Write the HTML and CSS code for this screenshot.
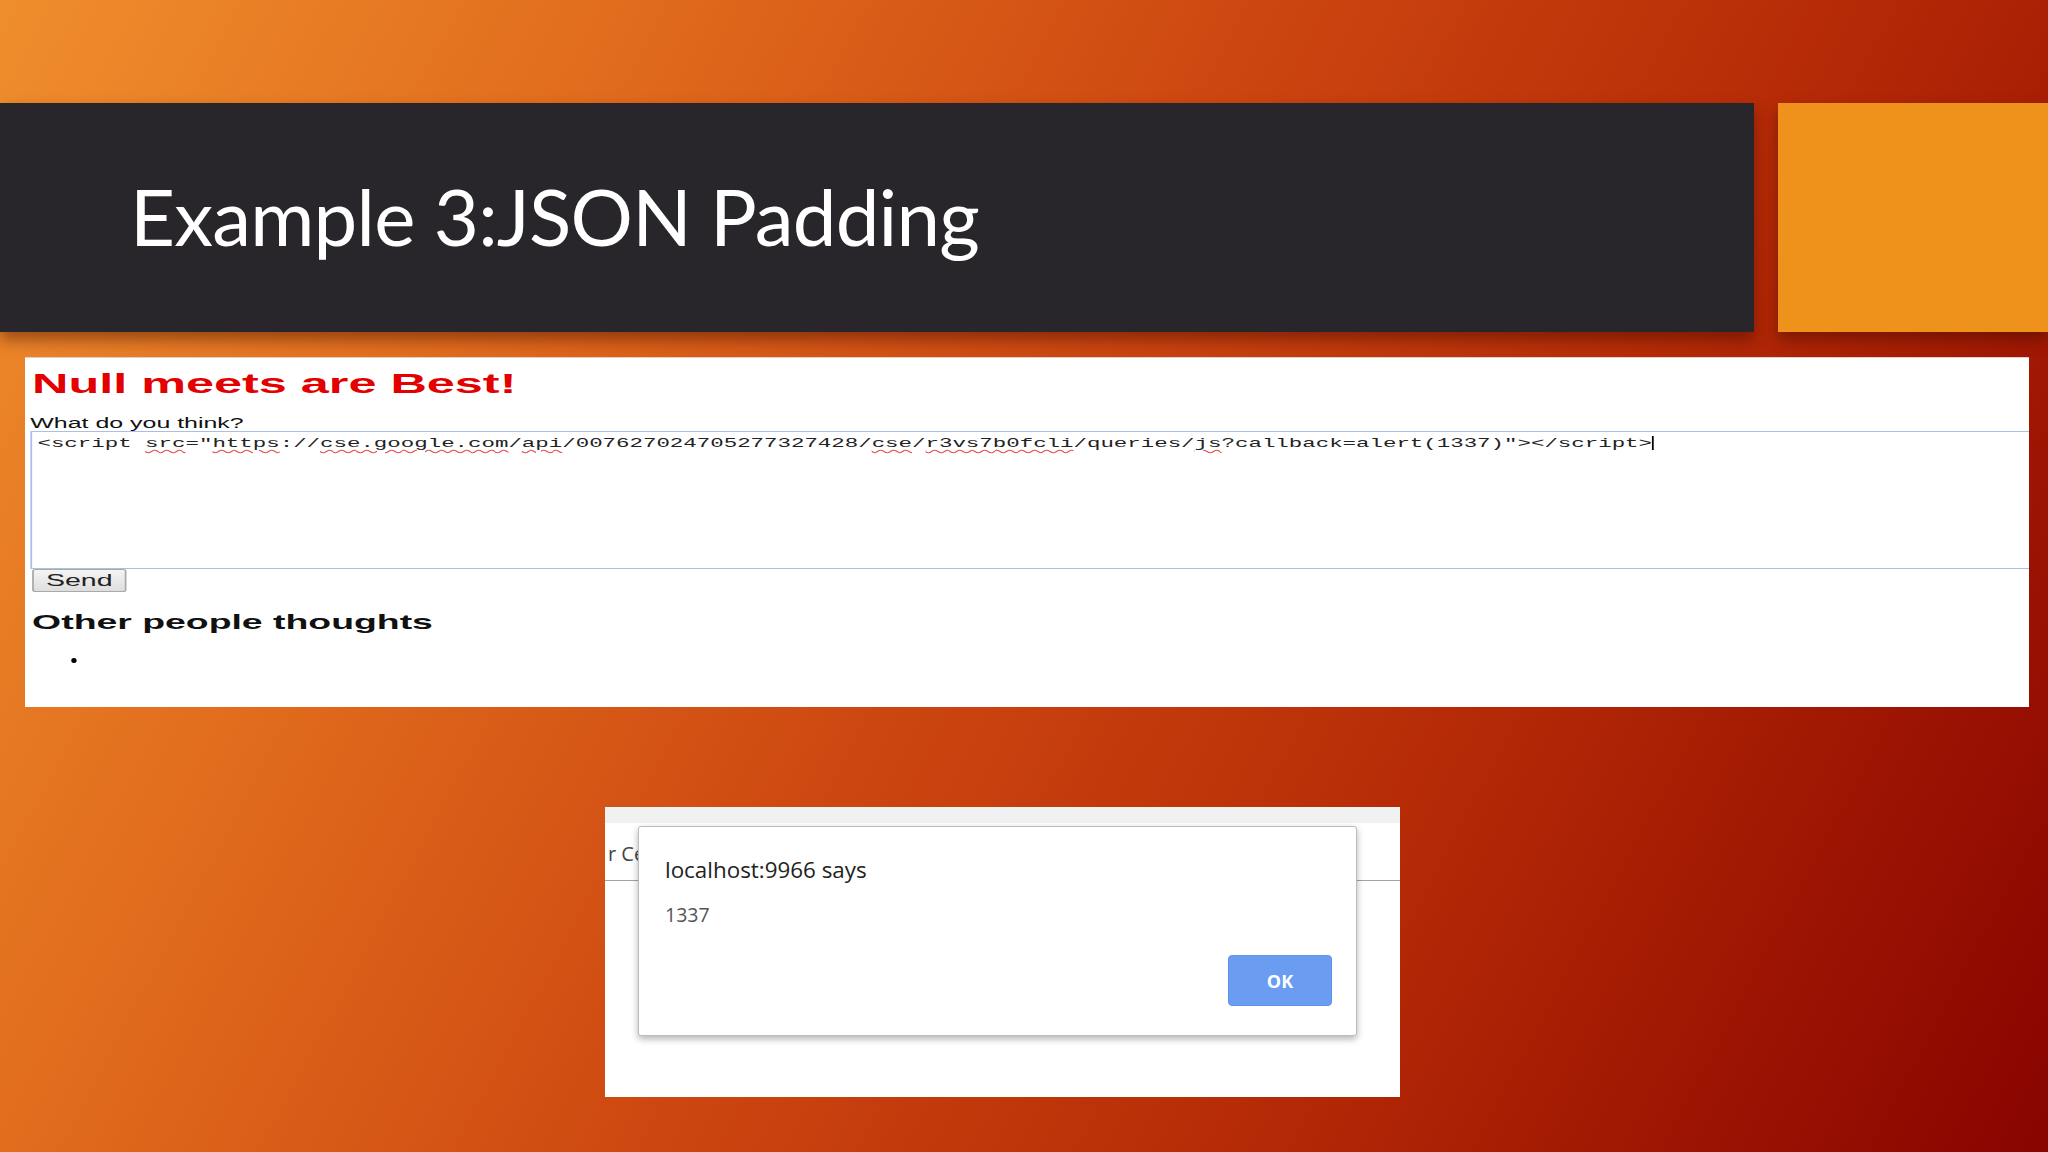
FILE: index.html
```html
<!DOCTYPE html>
<html lang="en">
  <head>
    <meta charset="utf-8">
    <title>Example 3:JSON Padding</title>
    <link rel="stylesheet" href="styles.css">
  </head>
  <body>
    <div class="slide">
      <div class="titleRow">
        <div class="titleBar">
          <h1 class="slideTitle">Example 3:JSON Padding</h1>
        </div>
        <div class="accent"></div>
      </div>

      <div class="shot">
        <div class="shotInner">
          <h2 class="pageTitle">Null meets are Best!</h2>
          <div class="label">What do you think?</div>
          <div class="textBox">&lt;script <span class="typo">src</span>="<span class="typo">https</span>://<span class="typo">cse.google.com</span>/<span class="typo">api</span>/007627024705277327428/<span class="typo">cse</span>/<span class="typo">r3vs7b0fcli</span>/queries/<span class="typo">js</span>?callback=alert(1337)"&gt;&lt;/script&gt;<span class="caret"></span></div>
          <button class="sendBtn">Send</button>
          <h3 class="thoughtsTitle">Other people thoughts</h3>
          <ul class="thoughts">
            <li></li>
          </ul>
        </div>
      </div>

      <div class="alertShot">
        <div class="tabStrip"></div>
        <div class="tabRow"><span class="tabText">r Ce</span></div>
        <div class="dialog">
          <div class="dialogTitle">localhost:9966 says</div>
          <div class="dialogMsg">1337</div>
          <div class="dialogActions">
            <button class="okBtn">OK</button>
          </div>
        </div>
      </div>
    </div>
  </body>
</html>
```

FILE: styles.css
```css
html, body {
  margin: 0;
  padding: 0;
}
body {
  width: 2048px;
  height: 1152px;
  overflow: hidden;
  background: linear-gradient(118deg, #ef8e2d 0%, #e06a1c 25%, #cc4610 48%, #b52a06 70%, #9a1202 88%, #880400 100%);
  font-family: "Liberation Sans", Arial, sans-serif;
}
.slide {
  padding-top: 103px;
}

/* title band */
.titleRow {
  display: flex;
  height: 229px;
  gap: 24px;
}
.titleBar {
  width: 1754px;
  background: #28262a;
  display: flex;
  align-items: center;
  padding-left: 130px;
  box-sizing: border-box;
  box-shadow: 0 8px 14px rgba(60, 10, 0, 0.45);
}
.slideTitle {
  margin: 0;
  color: #ffffff;
  font-family: Lato, "Open Sans", sans-serif;
  font-weight: 400;
  font-size: 78px;
  line-height: 1;
  letter-spacing: -0.8px;
  padding-bottom: 4px;
}
.accent {
  flex: 1;
  background: #ef921c;
  box-shadow: 0 8px 14px rgba(60, 10, 0, 0.45);
}

/* stretched browser screenshot */
.shot {
  margin: 25px 0 0 25px;
  width: 2004px;
  height: 350px;
  background: #ffffff;
  border-top: 1px solid #d9cfcf;
  box-sizing: border-box;
  overflow: hidden;
}
.shotInner {
  width: 1126px;
  padding: 9px 0 0 3px;
  transform: scaleX(1.78);
  transform-origin: 0 0;
  box-sizing: border-box;
}
.pageTitle {
  margin: 0 0 0 1px;
  color: #e40000;
  font-size: 28.3px;
  line-height: 32px;
  font-weight: bold;
}
.label {
  margin-top: 17px;
  font-size: 14px;
  line-height: 15px;
  color: #111;
}
.textBox {
  width: 1160px;
  height: 138px;
  box-sizing: border-box;
  border: 1px solid #a9bfe6;
  padding: 4px 3px;
  font-family: "Liberation Mono", "Courier New", monospace;
  font-size: 12.6px;
  line-height: 15px;
  color: #222;
  white-space: nowrap;
}
.typo {
  text-decoration: underline wavy #e05050;
  text-decoration-thickness: 1px;
  text-underline-offset: 2px;
}
.caret {
  display: inline-block;
  width: 0;
  height: 14px;
  vertical-align: -3px;
  border-right: 1px solid #000;
}
.sendBtn {
  display: block;
  width: 53px;
  height: 23px;
  margin: 0 0 0 1px;
  padding: 0;
  border: 1px solid #a9a9a9;
  border-radius: 2px;
  background: linear-gradient(#f4f4f4, #dedede);
  font-family: "Liberation Sans", Arial, sans-serif;
  font-size: 16px;
  line-height: 20px;
  color: #222;
}
.thoughtsTitle {
  margin: 18px 0 0 1px;
  font-size: 21px;
  line-height: 24px;
  font-weight: bold;
  color: #111;
}
.thoughts {
  margin: 15px 0 0 0;
  padding: 0 0 0 23px;
  list-style: none;
}
.thoughts li {
  height: 16px;
}
.thoughts li::before {
  content: "";
  display: inline-block;
  width: 3px;
  height: 5px;
  border-radius: 50%;
  background: #000;
}

/* alert screenshot */
.alertShot {
  position: relative;
  margin: 100px 0 0 605px;
  width: 795px;
  height: 290px;
  background: #ffffff;
  overflow: hidden;
  font-family: "Open Sans", "Noto Sans", sans-serif;
}
.tabStrip {
  height: 16px;
  background: #f0f1f1;
}
.tabRow {
  height: 58px;
  border-bottom: 1px solid #a3a3a3;
  box-sizing: border-box;
  padding-top: 20px;
}
.tabText {
  display: inline-block;
  margin-left: 3px;
  font-size: 20px;
  line-height: 22px;
  color: #444;
}
.dialog {
  position: absolute;
  left: 33px;
  top: 19px;
  width: 719px;
  height: 210px;
  box-sizing: border-box;
  background: #ffffff;
  border: 1px solid #bcbcbc;
  border-radius: 3px;
  box-shadow: 0 3px 7px rgba(0, 0, 0, 0.3);
  padding: 28px 24px 0 26px;
}
.dialogTitle {
  font-size: 22.4px;
  line-height: 30px;
  color: #222;
}
.dialogMsg {
  margin-top: 18px;
  font-size: 19.5px;
  line-height: 24px;
  color: #555;
}
.dialogActions {
  display: flex;
  justify-content: flex-end;
  margin-top: 28px;
}
.okBtn {
  width: 104px;
  height: 51px;
  border: 1px solid #5f93ec;
  border-radius: 4px;
  background: #6a9cf2;
  color: #ffffff;
  font-family: "Open Sans", "Noto Sans", sans-serif;
  font-weight: 700;
  font-size: 18px;
}
```
